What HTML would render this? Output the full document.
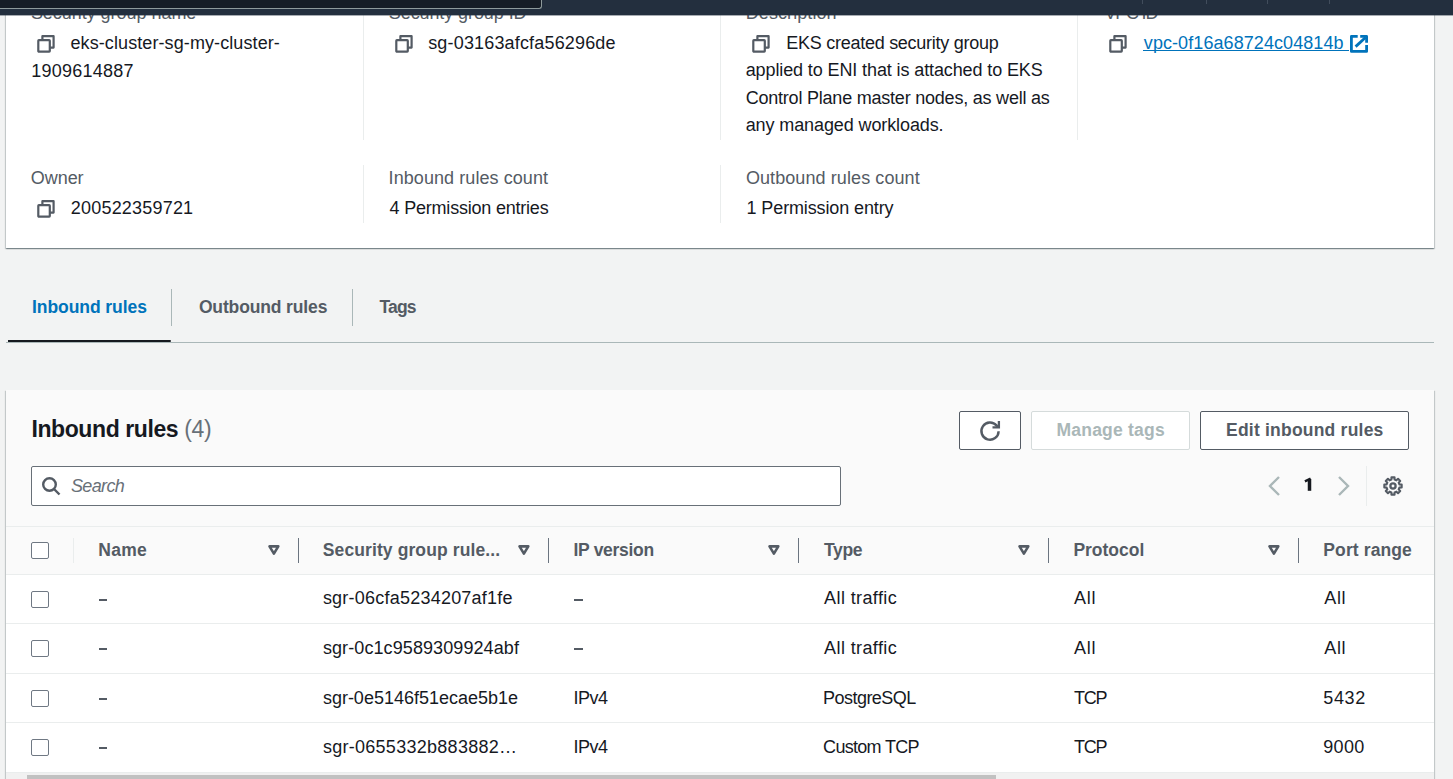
<!DOCTYPE html>
<html><head><meta charset="utf-8">
<style>
*{box-sizing:border-box;margin:0;padding:0}
html,body{width:1453px;height:779px;overflow:hidden;background:#f2f3f3;font-family:"Liberation Sans",sans-serif;color:#16191f}
.a{position:absolute}
.t{position:absolute;white-space:nowrap}
.card{position:absolute;background:#fff;box-shadow:0 1px 1px 0 rgba(0,28,36,.3),1px 1px 1px 0 rgba(0,28,36,.15),-1px 1px 1px 0 rgba(0,28,36,.15)}
.vdiv{position:absolute;width:1px;background:#eaeded}
.hl{position:absolute;height:1px;background:#eaeded}
.btn{position:absolute;background:#fff;border:1px solid #545b64;border-radius:2px}
.btn.dis{border-color:#d5dbdb}
.cb{position:absolute;width:17.5px;height:17px;border:1.3px solid #6f7883;border-radius:2px;background:#fff}
</style></head><body>
<div class="card" style="left:6px;top:-20px;width:1428px;height:268px"></div>
<div class="vdiv" style="left:363px;top:15px;height:125px"></div>
<div class="vdiv" style="left:720px;top:15px;height:125px"></div>
<div class="vdiv" style="left:1077px;top:15px;height:125px"></div>
<div class="vdiv" style="left:363px;top:165px;height:58px"></div>
<div class="vdiv" style="left:720px;top:165px;height:58px"></div>
<div class="t" style="left:30.9px;top:3.4px;font-size:18px;line-height:20px;color:#545b64;letter-spacing:-0.033px">Security group name</div>
<div class="t" style="left:388.8px;top:3.4px;font-size:18px;line-height:20px;color:#545b64;letter-spacing:-0.081px">Security group ID</div>
<div class="t" style="left:745.7px;top:3.4px;font-size:18px;line-height:20px;color:#545b64;letter-spacing:0.090px">Description</div>
<div class="t" style="left:1104.4px;top:3.4px;font-size:18px;line-height:20px;color:#545b64;letter-spacing:-1.200px">VPC ID</div>
<svg class="a" style="left:37px;top:35px" width="18" height="18" viewBox="0 0 18 18"><path d="M5.4 5.1V1.2H16.6V12.6H12.8" fill="none" stroke="#545b64" stroke-width="2.2" stroke-linejoin="round"/><rect x="1.3" y="5.1" width="11.5" height="11.5" rx="0.6" fill="none" stroke="#545b64" stroke-width="2.2" stroke-linejoin="round"/></svg>
<div class="t" style="left:70.5px;top:32.7px;font-size:18px;line-height:20px;color:#16191f;letter-spacing:0.092px">eks-cluster-sg-my-cluster-</div>
<div class="t" style="left:31.3px;top:60.8px;font-size:18px;line-height:20px;color:#16191f;letter-spacing:0.244px">1909614887</div>
<svg class="a" style="left:395px;top:35px" width="18" height="18" viewBox="0 0 18 18"><path d="M5.4 5.1V1.2H16.6V12.6H12.8" fill="none" stroke="#545b64" stroke-width="2.2" stroke-linejoin="round"/><rect x="1.3" y="5.1" width="11.5" height="11.5" rx="0.6" fill="none" stroke="#545b64" stroke-width="2.2" stroke-linejoin="round"/></svg>
<div class="t" style="left:428.2px;top:32.7px;font-size:18px;line-height:20px;color:#16191f;letter-spacing:0.168px">sg-03163afcfa56296de</div>
<svg class="a" style="left:752px;top:35px" width="18" height="18" viewBox="0 0 18 18"><path d="M5.4 5.1V1.2H16.6V12.6H12.8" fill="none" stroke="#545b64" stroke-width="2.2" stroke-linejoin="round"/><rect x="1.3" y="5.1" width="11.5" height="11.5" rx="0.6" fill="none" stroke="#545b64" stroke-width="2.2" stroke-linejoin="round"/></svg>
<div class="t" style="left:786.2px;top:32.7px;font-size:18px;line-height:20px;color:#16191f;letter-spacing:-0.260px">EKS created security group</div>
<div class="t" style="left:745.7px;top:60.4px;font-size:18px;line-height:20px;color:#16191f;letter-spacing:-0.111px">applied to ENI that is attached to EKS</div>
<div class="t" style="left:745.7px;top:87.5px;font-size:18px;line-height:20px;color:#16191f;letter-spacing:-0.216px">Control Plane master nodes, as well as</div>
<div class="t" style="left:745.7px;top:115.0px;font-size:18px;line-height:20px;color:#16191f;letter-spacing:-0.105px">any managed workloads.</div>
<svg class="a" style="left:1109px;top:35px" width="18" height="18" viewBox="0 0 18 18"><path d="M5.4 5.1V1.2H16.6V12.6H12.8" fill="none" stroke="#545b64" stroke-width="2.2" stroke-linejoin="round"/><rect x="1.3" y="5.1" width="11.5" height="11.5" rx="0.6" fill="none" stroke="#545b64" stroke-width="2.2" stroke-linejoin="round"/></svg>
<div class="t" style="left:1143.8px;top:32.5px;font-size:18px;line-height:20px;color:#0073bb;letter-spacing:0.080px">vpc-0f16a68724c04814b</div>
<div class="a" style="left:1143px;top:50px;width:206px;height:1px;background:#0073bb"></div>
<svg class="a" style="left:1349px;top:34px" width="20" height="20" viewBox="0 0 20 20"><path d="M8.7 2.4H2.4V17.4H17.6V11.1" fill="none" stroke="#0073bb" stroke-width="2.8" stroke-linejoin="round" stroke-linecap="butt"/><path d="M11.2 2.4H17.6V8.8" fill="none" stroke="#0073bb" stroke-width="2.8" stroke-linejoin="round"/><path d="M6.6 12.6L16.5 3.5" fill="none" stroke="#0073bb" stroke-width="2.8"/></svg>
<div class="t" style="left:30.8px;top:168.0px;font-size:18px;line-height:20px;color:#545b64;letter-spacing:-0.050px">Owner</div>
<svg class="a" style="left:37px;top:200px" width="18" height="18" viewBox="0 0 18 18"><path d="M5.4 5.1V1.2H16.6V12.6H12.8" fill="none" stroke="#545b64" stroke-width="2.2" stroke-linejoin="round"/><rect x="1.3" y="5.1" width="11.5" height="11.5" rx="0.6" fill="none" stroke="#545b64" stroke-width="2.2" stroke-linejoin="round"/></svg>
<div class="t" style="left:70.8px;top:197.7px;font-size:18px;line-height:20px;color:#16191f;letter-spacing:0.200px">200522359721</div>
<div class="t" style="left:388.6px;top:167.8px;font-size:18px;line-height:20px;color:#545b64;letter-spacing:0.072px">Inbound rules count</div>
<div class="t" style="left:389.6px;top:197.6px;font-size:18px;line-height:20px;color:#16191f;letter-spacing:-0.211px">4 Permission entries</div>
<div class="t" style="left:745.9px;top:167.8px;font-size:18px;line-height:20px;color:#545b64;letter-spacing:0.089px">Outbound rules count</div>
<div class="t" style="left:746.6px;top:197.6px;font-size:18px;line-height:20px;color:#16191f;letter-spacing:-0.124px">1 Permission entry</div>
<div class="a" style="left:0;top:0;width:1453px;height:15px;background:#232f3e"></div>
<div class="a" style="left:0;top:15px;width:1453px;height:1px;background:rgba(35,47,62,0.4)"></div>
<div class="a" style="left:0;top:-3px;width:542px;height:12px;background:#161d26;border:1px solid #8e9a9b;border-top:none;border-left:none;border-radius:0 0 3px 0"></div>
<div class="a" style="left:1142px;top:0;width:1px;height:4px;background:#414d5c"></div>
<div class="a" style="left:1206px;top:0;width:1px;height:4px;background:#414d5c"></div>
<div class="a" style="left:1267px;top:0;width:1px;height:4px;background:#414d5c"></div>
<div class="a" style="left:1329px;top:0;width:1px;height:4px;background:#414d5c"></div>
<div class="hl" style="left:6px;top:342px;width:1428px;background:#aab7b8"></div>
<div class="a" style="left:8px;top:340px;width:163px;height:2px;background:#16191f;border-radius:0 1px 1px 0"></div>
<div class="vdiv" style="left:171px;top:289px;height:37px;background:#aab7b8"></div>
<div class="vdiv" style="left:352px;top:289px;height:37px;background:#aab7b8"></div>
<div class="t" style="left:32.0px;top:297.0px;font-size:17.5px;line-height:20px;color:#0073bb;letter-spacing:-0.067px;font-weight:bold">Inbound rules</div>
<div class="t" style="left:198.9px;top:296.6px;font-size:17.5px;line-height:20px;color:#545b64;letter-spacing:-0.138px;font-weight:bold">Outbound rules</div>
<div class="t" style="left:379.6px;top:296.6px;font-size:17.5px;line-height:20px;color:#545b64;letter-spacing:-0.867px;font-weight:bold">Tags</div>
<div class="card" style="left:6px;top:390px;width:1428px;height:400px;background:#fafafa"></div>
<div class="t" style="left:31.4px;top:416.2px;font-size:23px;line-height:26px;color:#16191f;letter-spacing:-0.400px;font-weight:bold">Inbound rules <span style="font-weight:normal;color:#687078">(4)</span></div>
<div class="btn" style="left:959px;top:411px;width:62px;height:39px"></div>
<svg class="a" style="left:979px;top:420px" width="22" height="22" viewBox="0 0 22 22"><path d="M19.6 11.2A8.6 8.6 0 1 1 17.6 5.6" fill="none" stroke="#545b64" stroke-width="2.4"/><path d="M19.9 1V7.4H13.5" fill="none" stroke="#545b64" stroke-width="2.3"/><path d="M16.8 4.8L19.4 7.2" stroke="#545b64" stroke-width="2.4"/></svg>
<div class="btn dis" style="left:1031px;top:411px;width:159px;height:39px"></div>
<div class="t" style="left:1056.5px;top:420.1px;font-size:17.5px;line-height:20px;color:#aab7b8;letter-spacing:0.220px;font-weight:bold">Manage tags</div>
<div class="btn" style="left:1200px;top:411px;width:209px;height:39px"></div>
<div class="t" style="left:1226.0px;top:420.1px;font-size:17.5px;line-height:20px;color:#545b64;letter-spacing:0.218px;font-weight:bold">Edit inbound rules</div>
<div class="a" style="left:31px;top:466px;width:810px;height:40px;background:#fff;border:1px solid #687078;border-radius:2px"></div>
<svg class="a" style="left:41px;top:476px" width="20" height="20" viewBox="0 0 20 20"><circle cx="8.5" cy="8.5" r="6.3" fill="none" stroke="#545b64" stroke-width="2.4"/><path d="M13 13L18.5 18.5" stroke="#545b64" stroke-width="2.4"/></svg>
<div class="t" style="left:71.0px;top:475.8px;font-size:18px;line-height:20px;color:#687078;letter-spacing:-0.660px;font-style:italic">Search</div>
<svg class="a" style="left:1266px;top:475px" width="16" height="22" viewBox="0 0 16 22"><path d="M13 2L4 11L13 20" fill="none" stroke="#aab7b8" stroke-width="2.4"/></svg>
<svg class="a" style="left:1300px;top:475px" width="16" height="20" viewBox="0 0 16 20"><path d="M9.5 3.9V15.8" stroke="#16191f" stroke-width="3.5"/><path d="M4.9 6.4L10.6 3.7" stroke="#16191f" stroke-width="2.4"/></svg>
<svg class="a" style="left:1336px;top:475px" width="16" height="22" viewBox="0 0 16 22"><path d="M3 2L12 11L3 20" fill="none" stroke="#aab7b8" stroke-width="2.4"/></svg>
<div class="vdiv" style="left:1366px;top:466px;height:40px"></div>
<svg class="a" style="left:1382px;top:475px" width="22" height="22" viewBox="0 0 22 22"><path d="M8.48 4.90L9.40 4.60L9.47 2.33L12.53 2.33L12.60 4.60L13.53 4.90L14.40 5.34L16.05 3.79L18.21 5.95L16.66 7.60L17.10 8.48L17.40 9.40L19.67 9.47L19.67 12.53L17.40 12.60L17.10 13.53L16.66 14.40L18.21 16.05L16.05 18.21L14.40 16.66L13.52 17.10L12.60 17.40L12.53 19.67L9.47 19.67L9.40 17.40L8.47 17.10L7.60 16.66L5.95 18.21L3.79 16.05L5.34 14.40L4.90 13.52L4.60 12.60L2.33 12.53L2.33 9.47L4.60 9.40L4.90 8.47L5.34 7.60L3.79 5.95L5.95 3.79L7.60 5.34Z" fill="none" stroke="#545b64" stroke-width="2.1" stroke-linejoin="round"/><circle cx="11" cy="11" r="2.6" fill="none" stroke="#545b64" stroke-width="2.3"/></svg>
<div class="hl" style="left:6px;top:526px;width:1428px"></div>
<div class="a" style="left:6px;top:574px;width:1428px;height:199px;background:#fff"></div>
<div class="hl" style="left:6px;top:574px;width:1428px"></div>
<div class="hl" style="left:6px;top:623px;width:1428px"></div>
<div class="hl" style="left:6px;top:673px;width:1428px"></div>
<div class="hl" style="left:6px;top:722px;width:1428px"></div>
<div class="hl" style="left:6px;top:772px;width:1428px"></div>
<div class="cb" style="left:31px;top:542px"></div>
<div class="vdiv" style="left:73px;top:538px;height:25px"></div>
<div class="t" style="left:98.3px;top:540.3px;font-size:17.5px;line-height:20px;color:#545b64;letter-spacing:0.233px;font-weight:bold">Name</div>
<div class="t" style="left:322.8px;top:540.3px;font-size:17.5px;line-height:20px;color:#545b64;letter-spacing:0.105px;font-weight:bold">Security group rule...</div>
<div class="t" style="left:573.5px;top:540.3px;font-size:17.5px;line-height:20px;color:#545b64;letter-spacing:-0.300px;font-weight:bold">IP version</div>
<div class="t" style="left:824.0px;top:540.3px;font-size:17.5px;line-height:20px;color:#545b64;letter-spacing:-0.333px;font-weight:bold">Type</div>
<div class="t" style="left:1073.4px;top:540.3px;font-size:17.5px;line-height:20px;color:#545b64;letter-spacing:-0.014px;font-weight:bold">Protocol</div>
<div class="t" style="left:1323.3px;top:540.3px;font-size:17.5px;line-height:20px;color:#545b64;letter-spacing:0.111px;font-weight:bold">Port range</div>
<div class="vdiv" style="left:298px;top:538px;height:25px;background:#6b7480"></div>
<svg class="a" style="left:267px;top:544px" width="14" height="12" viewBox="0 0 14 12"><path d="M2.5 2.4H11.3L6.9 9.7Z" fill="none" stroke="#545b64" stroke-width="2.6" stroke-linejoin="round"/></svg>
<div class="vdiv" style="left:548px;top:538px;height:25px;background:#6b7480"></div>
<svg class="a" style="left:517px;top:544px" width="14" height="12" viewBox="0 0 14 12"><path d="M2.5 2.4H11.3L6.9 9.7Z" fill="none" stroke="#545b64" stroke-width="2.6" stroke-linejoin="round"/></svg>
<div class="vdiv" style="left:798px;top:538px;height:25px;background:#6b7480"></div>
<svg class="a" style="left:767px;top:544px" width="14" height="12" viewBox="0 0 14 12"><path d="M2.5 2.4H11.3L6.9 9.7Z" fill="none" stroke="#545b64" stroke-width="2.6" stroke-linejoin="round"/></svg>
<div class="vdiv" style="left:1048px;top:538px;height:25px;background:#6b7480"></div>
<svg class="a" style="left:1017px;top:544px" width="14" height="12" viewBox="0 0 14 12"><path d="M2.5 2.4H11.3L6.9 9.7Z" fill="none" stroke="#545b64" stroke-width="2.6" stroke-linejoin="round"/></svg>
<div class="vdiv" style="left:1298px;top:538px;height:25px;background:#6b7480"></div>
<svg class="a" style="left:1267px;top:544px" width="14" height="12" viewBox="0 0 14 12"><path d="M2.5 2.4H11.3L6.9 9.7Z" fill="none" stroke="#545b64" stroke-width="2.6" stroke-linejoin="round"/></svg>
<div class="cb" style="left:31px;top:591px"></div>
<div class="a" style="left:99px;top:599px;width:8px;height:1.5px;background:#545b64"></div>
<div class="a" style="left:574px;top:599px;width:9px;height:1.5px;background:#545b64"></div>
<div class="cb" style="left:31px;top:640px"></div>
<div class="a" style="left:99px;top:648px;width:8px;height:1.5px;background:#545b64"></div>
<div class="a" style="left:574px;top:648px;width:9px;height:1.5px;background:#545b64"></div>
<div class="cb" style="left:31px;top:690px"></div>
<div class="a" style="left:99px;top:698px;width:8px;height:1.5px;background:#545b64"></div>
<div class="cb" style="left:31px;top:739px"></div>
<div class="a" style="left:99px;top:747px;width:8px;height:1.5px;background:#545b64"></div>
<div class="t" style="left:322.9px;top:588.4px;font-size:18px;line-height:20px;color:#16191f;letter-spacing:0.225px">sgr-06cfa5234207af1fe</div>
<div class="t" style="left:322.9px;top:638.0px;font-size:18px;line-height:20px;color:#16191f;letter-spacing:0.095px">sgr-0c1c9589309924abf</div>
<div class="t" style="left:322.9px;top:688.0px;font-size:18px;line-height:20px;color:#16191f;letter-spacing:-0.005px">sgr-0e5146f51ecae5b1e</div>
<div class="t" style="left:322.9px;top:737.2px;font-size:18px;line-height:20px;color:#16191f;letter-spacing:0.278px">sgr-0655332b883882…</div>
<div class="t" style="left:573.4px;top:688.0px;font-size:18px;line-height:20px;color:#16191f;letter-spacing:-0.500px">IPv4</div>
<div class="t" style="left:573.4px;top:737.2px;font-size:18px;line-height:20px;color:#16191f;letter-spacing:-0.500px">IPv4</div>
<div class="t" style="left:824.1px;top:588.4px;font-size:18px;line-height:20px;color:#16191f;letter-spacing:0.390px">All traffic</div>
<div class="t" style="left:824.1px;top:638.0px;font-size:18px;line-height:20px;color:#16191f;letter-spacing:0.390px">All traffic</div>
<div class="t" style="left:823.1px;top:688.0px;font-size:18px;line-height:20px;color:#16191f;letter-spacing:-0.544px">PostgreSQL</div>
<div class="t" style="left:823.1px;top:737.2px;font-size:18px;line-height:20px;color:#16191f;letter-spacing:-0.700px">Custom TCP</div>
<div class="t" style="left:1073.9px;top:588.4px;font-size:18px;line-height:20px;color:#16191f;letter-spacing:0.800px">All</div>
<div class="t" style="left:1073.9px;top:638.0px;font-size:18px;line-height:20px;color:#16191f;letter-spacing:0.800px">All</div>
<div class="t" style="left:1073.9px;top:688.0px;font-size:18px;line-height:20px;color:#16191f;letter-spacing:-1.200px">TCP</div>
<div class="t" style="left:1073.9px;top:737.2px;font-size:18px;line-height:20px;color:#16191f;letter-spacing:-1.200px">TCP</div>
<div class="t" style="left:1324.3px;top:588.4px;font-size:18px;line-height:20px;color:#16191f;letter-spacing:0.650px">All</div>
<div class="t" style="left:1324.3px;top:638.0px;font-size:18px;line-height:20px;color:#16191f;letter-spacing:0.650px">All</div>
<div class="t" style="left:1323.3px;top:688.0px;font-size:18px;line-height:20px;color:#16191f;letter-spacing:0.633px">5432</div>
<div class="t" style="left:1323.3px;top:737.2px;font-size:18px;line-height:20px;color:#16191f;letter-spacing:0.300px">9000</div>
<div class="a" style="left:6px;top:773px;width:1428px;height:6px;background:#f1f1f1"></div>
<div class="a" style="left:27px;top:775px;width:969px;height:6px;background:#c1c1c1"></div>
</body></html>
